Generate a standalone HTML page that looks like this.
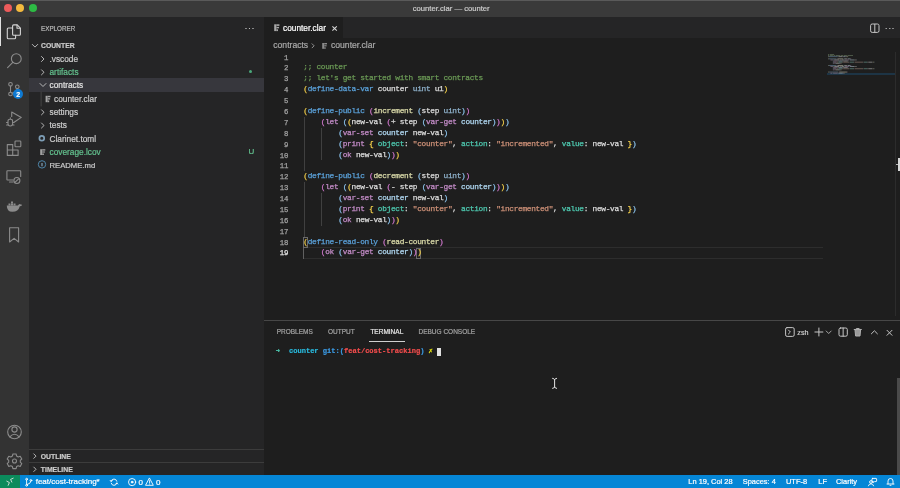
<!DOCTYPE html>
<html><head><meta charset="utf-8">
<style>
*{margin:0;padding:0;box-sizing:border-box}
body{will-change:transform}
html,body{width:900px;height:488px;overflow:hidden;background:#1e1e1e;font-family:"Liberation Sans",sans-serif;color:#cccccc}
.a{position:absolute}
.t{position:absolute;white-space:pre;line-height:1;-webkit-text-stroke:0.2px currentColor}
#title{left:0;top:0;width:900px;height:17px;background:#3a3a3a;border-top:1px solid #5a5a5a}
#act{left:0;top:17px;width:29px;height:458px;background:#333333}
#side{left:29px;top:17px;width:235px;height:458px;background:#252526}
#tabs{left:264px;top:17px;width:636px;height:21px;background:#252526}
#tab1{left:264px;top:17px;width:79px;height:21px;background:#1e1e1e}
#status{left:0;top:475px;width:900px;height:13px;background:#0586d6}
#remote{left:0;top:475px;width:20px;height:13px;background:#0b8b5c}
.mono{font-family:"Liberation Mono",monospace}
.code{position:absolute;left:303.3px;-webkit-text-stroke:0.25px currentColor;transform:translateY(0.2px);font-family:"Liberation Mono",monospace;font-size:7.8px;letter-spacing:-0.3px;white-space:pre;line-height:10.833px;height:10.833px}
.ln{position:absolute;left:264px;-webkit-text-stroke:0.25px currentColor;transform:translateY(0.6px);width:24.4px;text-align:right;font-family:"Liberation Mono",monospace;font-size:7.3px;white-space:pre;line-height:10.833px;color:#9a9a9a}
.g1{color:#f2cf4a}.g2{color:#d279cf}.g3{color:#8cc4ee}
.kw{color:#5aa0d8}.pk{color:#c48cc8}.fn{color:#dcdcaa}.vr{color:#b0d8f2}.wh{color:#dcdcdc}.ty{color:#4ec9b0}.ui{color:#8fb2cc}.st{color:#ce9178}.cm{color:#6a9955}.nm{color:#b5cea8}
</style></head><body>
<div id="title" class="a"></div>
<div class="a" style="left:4.2px;top:4.2px;width:8px;height:8px;border-radius:50%;background:#ec5b5b"></div>
<div class="a" style="left:16px;top:4.2px;width:8px;height:8px;border-radius:50%;background:#f4ba3e"></div>
<div class="a" style="left:28.8px;top:4.2px;width:8px;height:8px;border-radius:50%;background:#2dbb44"></div>
<div class="t" style="left:412.8px;top:4.8px;font-size:7.65px;color:#cccccc">counter.clar — counter</div>

<div id="act" class="a"></div>
<div id="side" class="a"></div>

<div class="a" style="left:0;top:17px;width:1.2px;height:29px;background:#e0e0e0"></div>
<!-- activity icons -->
<svg class="a" style="left:0;top:17px" width="29" height="458" viewBox="0 0 29 458" fill="none" stroke-linecap="round" stroke-linejoin="round">
 <g stroke="#d4d4d4" stroke-width="1.1">
  <path d="M13.6 7.9 h3.6 l3.2 3.2 v6.1 q0 1 -1 1 h-5.8 q-1 0 -1 -1 v-8.3 q0 -1 1 -1z"/>
  <path d="M17 8 v3.2 h3.3"/>
  <path d="M12.6 11 h-4.3 q-1 0 -1 1 v8.8 q0 1 1 1 h6.3 q1 0 1 -1 v-2.5"/>
 </g>
 <g stroke="#8c8c8c" stroke-width="1.1">
  <circle cx="16.3" cy="41.7" r="4.9"/>
  <path d="M12.8 45.3 L7.6 50.6"/>
  <circle cx="10.5" cy="67.3" r="1.8"/><circle cx="10.5" cy="77" r="1.8"/><circle cx="17.3" cy="69.8" r="1.8"/>
  <path d="M10.5 69.1 V75.2 M17.3 71.6 q0 3.3 -5.2 4.6"/>
  <path d="M11.7 99.5 V95 L21.3 100.4 L14.5 105"/>
  <path d="M8 104 q0 -1.8 2.3 -1.8 q2.3 0 2.3 1.8 v2.8 q0 2.2 -2.3 2.2 q-2.3 0 -2.3 -2.2z M7.8 105.5 h-1.3 M12.8 105.5 h1.3 M7.8 108 h-1.2 M12.8 108 h1.2 M10.3 102.2 v-1.3"/>
  <path d="M7.3 127.6 h5.4 v5.4 h-5.4z M7.3 133 h5.4 v5.4 h-5.4z M12.7 133 h5.4 v5.4 h-5.4z"/><rect x="15" y="124" width="5.8" height="5.8" rx="0.8"/>
  <path d="M13 163 h-5.5 q-0.6 0 -0.6 -0.6 v-8 q0 -0.6 0.6 -0.6 h12.6 q0.6 0 0.6 0.6 v5 M9.5 165 h3.5"/>
  <circle cx="16.9" cy="163.5" r="3" fill="#333"/>
  <path d="M15.2 165.2 L18.6 161.8"/>
  <path d="M9.6 210.8 h9 v14.2 l-4.5 -3.6 l-4.5 3.6z"/>
  <circle cx="14.5" cy="415" r="6.8"/>
  <circle cx="14.5" cy="412.5" r="2.6"/>
  <path d="M9.8 419.8 q4.7 -5 9.4 0"/>
 </g>
 <path d="M6.8 188.5 h11 q1 -1.8 2.2 -1.6 l0.6 0.6 q1.2 -0.3 1.6 0.5 q-1 1.2 -2.4 1.2 q-1.5 5.6 -7.5 5.6 q-5.5 0 -5.5 -6.3z M8.5 186.6 h2 v1.6 h-2z M11 186.6 h2 v1.6 h-2z M11 184.6 h2 v1.6 h-2z M13.5 186.6 h2 v1.6 h-2z" fill="#8c8c8c"/>
 <g stroke="#8c8c8c" stroke-width="1.1" transform="translate(14.5 444)">
  <circle r="2"/>
  <path d="M-1.6 -7 h3.2 l0.5 2 l1.6 0.9 l2 -0.7 l1.6 2.8 l-1.5 1.4 v1.8 l1.5 1.4 l-1.6 2.8 l-2 -0.7 l-1.6 0.9 l-0.5 2 h-3.2 l-0.5 -2 l-1.6 -0.9 l-2 0.7 l-1.6 -2.8 l1.5 -1.4 v-1.8 l-1.5 -1.4 l1.6 -2.8 l2 0.7 l1.6 -0.9z"/>
 </g>
</svg>
<div class="a" style="left:13.4px;top:89px;width:10px;height:10px;border-radius:50%;background:#0e7ad3"></div>
<div class="t" style="left:16.3px;top:90.6px;font-size:7px;font-weight:700;color:#fff">2</div>

<!-- sidebar -->
<div class="t" style="left:40.9px;top:24.8px;font-size:7.2px;color:#bbbbbb;transform:scaleX(0.875);transform-origin:0 0">EXPLORER</div>
<div class="t" style="left:244.6px;top:23.6px;font-size:9px;color:#cccccc;letter-spacing:0.5px">···</div>
<div class="t" style="left:41px;top:42.4px;font-size:7.3px;font-weight:700;color:#cccccc;transform:scaleX(0.93);transform-origin:0 0">COUNTER</div>
<div class="a" style="left:29px;top:78px;width:235px;height:13.7px;background:#37373d"></div>
<svg class="a" style="left:29px;top:17px" width="235" height="160" fill="none" stroke="#c5c5c5" stroke-width="0.9" stroke-linecap="round" stroke-linejoin="round">
 <path d="M3.3 27.4 l2.7 2.7 l2.7 -2.7"/>
 <path d="M12.5 39.5 l2.5 2.5 l-2.5 2.5"/>
 <path d="M12.5 52.8 l2.5 2.5 l-2.5 2.5"/>
 <path d="M11 66.5 l3 3 l3 -3"/>
 <path d="M12.5 92.8 l2.5 2.5 l-2.5 2.5"/>
 <path d="M12.5 106 l2.5 2.5 l-2.5 2.5"/>
 <path d="M12.1 75 v14" stroke="#4a4a4a"/>
</svg>
<div class="t" style="left:49.5px;top:54.9px;font-size:8.3px;color:#cccccc">.vscode</div>
<div class="t" style="left:49.5px;top:68.2px;font-size:8.3px;color:#64c28f">artifacts</div>
<div class="a" style="left:248.8px;top:69.7px;width:3.6px;height:3.6px;border-radius:50%;background:#4aa87a"></div>
<div class="t" style="left:49.5px;top:81.4px;font-size:8.3px;color:#e0e0e0">contracts</div>
<div class="t" style="left:54px;top:95.0px;font-size:8.3px;color:#cccccc">counter.clar</div>
<div class="t" style="left:49.5px;top:108.2px;font-size:8.3px;color:#cccccc">settings</div>
<div class="t" style="left:49.5px;top:121.4px;font-size:8.3px;color:#cccccc">tests</div>
<div class="t" style="left:49.5px;top:134.7px;font-size:8.3px;color:#cccccc">Clarinet.toml</div>
<div class="t" style="left:49.5px;top:148.0px;font-size:8.3px;color:#64c28f">coverage.lcov</div>
<div class="t" style="left:248.4px;top:148.0px;font-size:8px;color:#64c28f">U</div>
<div class="t" style="left:49.5px;top:161.6px;font-size:7.7px;color:#cccccc">README.md</div>
<svg class="a" style="left:0;top:0" width="60" height="175">
 <g fill="#a6a6a6"><rect x="45.6" y="95.8" width="2" height="6.4"/><rect x="47.6" y="95.8" width="2.9" height="1.5"/><rect x="47.6" y="98.2" width="2.5" height="1.3"/><rect x="47.6" y="100.5" width="1.6" height="1.7"/></g>
 <g fill="#a0a0a0"><rect x="40.2" y="149.2" width="2" height="5.8"/><rect x="42.2" y="149.2" width="3.1" height="1.4"/><rect x="42.2" y="151.4" width="2.7" height="1.2"/><rect x="42.2" y="153.5" width="1.7" height="1.5"/></g>
 <circle cx="41.8" cy="138.3" r="2.4" fill="none" stroke="#7d9db5" stroke-width="1.7"/>
 <circle cx="42" cy="164.4" r="3.7" fill="none" stroke="#4f86aa" stroke-width="1"/>
 <path d="M42 163 v3.2" stroke="#8ab0c8" stroke-width="1.1"/>
</svg>
<!-- outline/timeline -->
<div class="a" style="left:29px;top:449px;width:235px;height:1px;background:#3c3c3c"></div>
<div class="a" style="left:29px;top:462px;width:235px;height:1px;background:#3c3c3c"></div>
<svg class="a" style="left:29px;top:449px" width="20" height="26" fill="none" stroke="#c5c5c5" stroke-width="0.9"><path d="M4.5 4.6 l2.5 2.5 l-2.5 2.5 M4.5 17.8 l2.5 2.5 l-2.5 2.5"/></svg>
<div class="t" style="left:40.8px;top:453.7px;font-size:6.85px;font-weight:700;color:#cccccc">OUTLINE</div>
<div class="t" style="left:40.8px;top:467px;font-size:6.85px;font-weight:700;color:#cccccc">TIMELINE</div>
<div id="tabs" class="a"></div>
<div id="tab1" class="a"></div>


<div class="a" style="left:264px;top:38px;width:636px;height:14px;background:#1e1e1e"></div>
<svg class="a" style="left:264px;top:17px" width="100" height="36">
 <g fill="#a8a8a8"><rect x="10.2" y="7.3" width="2.2" height="6.8"/><rect x="12.4" y="7.3" width="3" height="1.6"/><rect x="12.4" y="9.9" width="2.6" height="1.4"/><rect x="12.4" y="12.3" width="1.6" height="1.8"/></g>
 <path d="M47.8 26.5 l2.3 2.3 l-2.3 2.3" fill="none" stroke="#a0a0a0" stroke-width="0.9"/>
 <g fill="#8a8a8a"><rect x="58.2" y="26" width="2" height="5.8"/><rect x="60.2" y="26" width="2.8" height="1.4"/><rect x="60.2" y="28.2" width="2.4" height="1.2"/><rect x="60.2" y="30.3" width="1.5" height="1.5"/></g>
 <path d="M68.4 9.3 l4.4 4.4 M72.8 9.3 l-4.4 4.4" fill="none" stroke="#d8d8d8" stroke-width="1.05"/>
</svg>
<div class="t" style="left:283px;top:23.6px;font-size:8.3px;color:#ffffff">counter.clar</div>
<div class="t" style="left:273.3px;top:41.4px;font-size:8.6px;color:#a9a9a9">contracts</div>
<div class="t" style="left:331px;top:41.4px;font-size:8.6px;color:#a9a9a9">counter.clar</div>
<svg class="a" style="left:868px;top:17px" width="32" height="21" fill="none" stroke="#c5c5c5" stroke-width="1">
 <rect x="2.6" y="7" width="8.4" height="8.4" rx="1.6"/><path d="M6.8 7 v8.4"/>
</svg>
<div class="t" style="left:884.8px;top:23.5px;font-size:9px;color:#c5c5c5;letter-spacing:0.4px">···</div>

<div class="ln" style="top:51.60px;color:#a2a2a2">1</div>
<div class="ln" style="top:62.48px;color:#a2a2a2">2</div>
<div class="ln" style="top:73.36px;color:#a2a2a2">3</div>
<div class="ln" style="top:84.24px;color:#a2a2a2">4</div>
<div class="ln" style="top:95.12px;color:#a2a2a2">5</div>
<div class="ln" style="top:106.00px;color:#a2a2a2">6</div>
<div class="ln" style="top:116.88px;color:#a2a2a2">7</div>
<div class="ln" style="top:127.76px;color:#a2a2a2">8</div>
<div class="ln" style="top:138.64px;color:#a2a2a2">9</div>
<div class="ln" style="top:149.52px;color:#a2a2a2">10</div>
<div class="ln" style="top:160.40px;color:#a2a2a2">11</div>
<div class="ln" style="top:171.28px;color:#a2a2a2">12</div>
<div class="ln" style="top:182.16px;color:#a2a2a2">13</div>
<div class="ln" style="top:193.04px;color:#a2a2a2">14</div>
<div class="ln" style="top:203.92px;color:#a2a2a2">15</div>
<div class="ln" style="top:214.80px;color:#a2a2a2">16</div>
<div class="ln" style="top:225.68px;color:#a2a2a2">17</div>
<div class="ln" style="top:236.56px;color:#a2a2a2">18</div>
<div class="ln" style="top:247.44px;color:#e6e6e6">19</div>
<div class="a" style="left:303px;top:247.4px;width:520px;height:11.5px;border:1px solid #2d2d2d;border-left:none;border-right:none"></div>
<div class="a" style="left:303.6px;top:116.88px;width:1px;height:54.40px;background:#404040"></div>
<div class="a" style="left:303.6px;top:182.16px;width:1px;height:54.40px;background:#404040"></div>
<div class="a" style="left:321.2px;top:127.76px;width:1px;height:32.64px;background:#404040"></div>
<div class="a" style="left:321.2px;top:193.04px;width:1px;height:32.64px;background:#404040"></div>
<div class="a" style="left:303.2px;top:247.44px;width:1px;height:11.3px;background:#606060"></div>
<div class="a" style="left:303.4px;top:236.8px;width:4.8px;height:11px;border:1px solid #6a6a6a"></div>
<div class="a" style="left:416.4px;top:247.6px;width:4.8px;height:11px;border:1px solid #6a6a6a"></div>
<div class="code" style="top:62.48px"><span class="cm">;; counter</span></div>
<div class="code" style="top:73.36px"><span class="cm">;; let's get started with smart contracts</span></div>
<div class="code" style="top:84.24px"><span class="g1">(</span><span class="kw">define-data-var</span> <span class="wh">counter</span> <span class="ui">uint</span> <span class="wh">u1</span><span class="g1">)</span></div>
<div class="code" style="top:106.00px"><span class="g1">(</span><span class="kw">define-public</span> <span class="g2">(</span><span class="fn">increment</span> <span class="g3">(</span><span class="wh">step</span> <span class="ui">uint</span><span class="g3">)</span><span class="g2">)</span></div>
<div class="code" style="top:116.88px">    <span class="g2">(</span><span class="pk">let</span> <span class="g3">(</span><span class="g1">(</span><span class="wh">new-val</span> <span class="g2">(</span><span class="wh">+ step</span> <span class="g3">(</span><span class="pk">var-get</span> <span class="vr">counter</span><span class="g3">)</span><span class="g2">)</span><span class="g1">)</span><span class="g3">)</span></div>
<div class="code" style="top:127.76px">        <span class="g3">(</span><span class="pk">var-set</span> <span class="vr">counter</span> <span class="wh">new-val</span><span class="g3">)</span></div>
<div class="code" style="top:138.64px">        <span class="g3">(</span><span class="pk">print</span> <span class="g1">{</span> <span class="ty">object</span><span class="wh">:</span> <span class="st">"counter"</span><span class="wh">,</span> <span class="ty">action</span><span class="wh">:</span> <span class="st">"incremented"</span><span class="wh">,</span> <span class="ty">value</span><span class="wh">:</span> <span class="wh">new-val</span> <span class="g1">}</span><span class="g3">)</span></div>
<div class="code" style="top:149.52px">        <span class="g3">(</span><span class="pk">ok</span> <span class="wh">new-val</span><span class="g3">)</span><span class="g2">)</span><span class="g1">)</span></div>
<div class="code" style="top:171.28px"><span class="g1">(</span><span class="kw">define-public</span> <span class="g2">(</span><span class="fn">decrement</span> <span class="g3">(</span><span class="wh">step</span> <span class="ui">uint</span><span class="g3">)</span><span class="g2">)</span></div>
<div class="code" style="top:182.16px">    <span class="g2">(</span><span class="pk">let</span> <span class="g3">(</span><span class="g1">(</span><span class="wh">new-val</span> <span class="g2">(</span><span class="wh">- step</span> <span class="g3">(</span><span class="pk">var-get</span> <span class="vr">counter</span><span class="g3">)</span><span class="g2">)</span><span class="g1">)</span><span class="g3">)</span></div>
<div class="code" style="top:193.04px">        <span class="g3">(</span><span class="pk">var-set</span> <span class="vr">counter</span> <span class="wh">new-val</span><span class="g3">)</span></div>
<div class="code" style="top:203.92px">        <span class="g3">(</span><span class="pk">print</span> <span class="g1">{</span> <span class="ty">object</span><span class="wh">:</span> <span class="st">"counter"</span><span class="wh">,</span> <span class="ty">action</span><span class="wh">:</span> <span class="st">"incremented"</span><span class="wh">,</span> <span class="ty">value</span><span class="wh">:</span> <span class="wh">new-val</span> <span class="g1">}</span><span class="g3">)</span></div>
<div class="code" style="top:214.80px">        <span class="g3">(</span><span class="pk">ok</span> <span class="wh">new-val</span><span class="g3">)</span><span class="g2">)</span><span class="g1">)</span></div>
<div class="code" style="top:236.56px"><span class="g1">(</span><span class="kw">define-read-only</span> <span class="g2">(</span><span class="fn">read-counter</span><span class="g2">)</span></div>
<div class="code" style="top:247.44px">    <span class="g2">(</span><span class="pk">ok</span> <span class="g3">(</span><span class="pk">var-get</span> <span class="vr">counter</span><span class="g3">)</span><span class="g2">)</span><span class="g1">)</span></div>
<div id="status" class="a"></div>
<div id="remote" class="a"></div>

<!-- minimap -->
<div class="a" style="left:827px;top:72.6px;width:68.5px;height:2.2px;background:#1d3445"></div>
<svg class="a" style="left:0;top:0;filter:saturate(0.5)" width="900" height="80" opacity="0.55"><rect x="828.00" y="54.00" width="1.22" height="0.9" fill="#6a9955"/><rect x="829.83" y="54.00" width="4.27" height="0.9" fill="#6a9955"/><rect x="828.00" y="55.10" width="1.22" height="0.9" fill="#6a9955"/><rect x="829.83" y="55.10" width="3.05" height="0.9" fill="#6a9955"/><rect x="833.49" y="55.10" width="1.83" height="0.9" fill="#6a9955"/><rect x="835.93" y="55.10" width="4.27" height="0.9" fill="#6a9955"/><rect x="840.81" y="55.10" width="2.44" height="0.9" fill="#6a9955"/><rect x="843.86" y="55.10" width="3.05" height="0.9" fill="#6a9955"/><rect x="847.52" y="55.10" width="5.49" height="0.9" fill="#6a9955"/><rect x="828.00" y="56.20" width="0.61" height="0.9" fill="#f2cf4a"/><rect x="828.61" y="56.20" width="9.15" height="0.9" fill="#5aa0d8"/><rect x="838.37" y="56.20" width="4.27" height="0.9" fill="#d4d4d4"/><rect x="843.25" y="56.20" width="2.44" height="0.9" fill="#b0d8f2"/><rect x="846.30" y="56.20" width="1.22" height="0.9" fill="#d4d4d4"/><rect x="847.52" y="56.20" width="0.61" height="0.9" fill="#f2cf4a"/><rect x="828.00" y="58.40" width="0.61" height="0.9" fill="#f2cf4a"/><rect x="828.61" y="58.40" width="7.93" height="0.9" fill="#5aa0d8"/><rect x="837.15" y="58.40" width="0.61" height="0.9" fill="#d279cf"/><rect x="837.76" y="58.40" width="5.49" height="0.9" fill="#dcdcaa"/><rect x="843.86" y="58.40" width="0.61" height="0.9" fill="#8cc4ee"/><rect x="844.47" y="58.40" width="2.44" height="0.9" fill="#d4d4d4"/><rect x="847.52" y="58.40" width="2.44" height="0.9" fill="#b0d8f2"/><rect x="849.96" y="58.40" width="0.61" height="0.9" fill="#8cc4ee"/><rect x="850.57" y="58.40" width="0.61" height="0.9" fill="#d279cf"/><rect x="830.44" y="59.50" width="0.61" height="0.9" fill="#d279cf"/><rect x="831.05" y="59.50" width="1.83" height="0.9" fill="#c48cc8"/><rect x="833.49" y="59.50" width="0.61" height="0.9" fill="#8cc4ee"/><rect x="834.10" y="59.50" width="0.61" height="0.9" fill="#f2cf4a"/><rect x="834.71" y="59.50" width="4.27" height="0.9" fill="#d4d4d4"/><rect x="839.59" y="59.50" width="0.61" height="0.9" fill="#d279cf"/><rect x="840.20" y="59.50" width="0.61" height="0.9" fill="#d4d4d4"/><rect x="841.42" y="59.50" width="2.44" height="0.9" fill="#d4d4d4"/><rect x="844.47" y="59.50" width="0.61" height="0.9" fill="#8cc4ee"/><rect x="845.08" y="59.50" width="4.27" height="0.9" fill="#c48cc8"/><rect x="849.96" y="59.50" width="4.27" height="0.9" fill="#b0d8f2"/><rect x="854.23" y="59.50" width="0.61" height="0.9" fill="#8cc4ee"/><rect x="854.84" y="59.50" width="0.61" height="0.9" fill="#d279cf"/><rect x="855.45" y="59.50" width="0.61" height="0.9" fill="#f2cf4a"/><rect x="856.06" y="59.50" width="0.61" height="0.9" fill="#8cc4ee"/><rect x="832.88" y="60.60" width="0.61" height="0.9" fill="#8cc4ee"/><rect x="833.49" y="60.60" width="4.27" height="0.9" fill="#c48cc8"/><rect x="838.37" y="60.60" width="4.27" height="0.9" fill="#b0d8f2"/><rect x="843.25" y="60.60" width="4.27" height="0.9" fill="#d4d4d4"/><rect x="847.52" y="60.60" width="0.61" height="0.9" fill="#8cc4ee"/><rect x="832.88" y="61.70" width="0.61" height="0.9" fill="#8cc4ee"/><rect x="833.49" y="61.70" width="3.05" height="0.9" fill="#c48cc8"/><rect x="837.15" y="61.70" width="0.61" height="0.9" fill="#f2cf4a"/><rect x="838.37" y="61.70" width="3.66" height="0.9" fill="#4ec9b0"/><rect x="842.03" y="61.70" width="0.61" height="0.9" fill="#d4d4d4"/><rect x="843.25" y="61.70" width="5.49" height="0.9" fill="#ce9178"/><rect x="848.74" y="61.70" width="0.61" height="0.9" fill="#d4d4d4"/><rect x="849.96" y="61.70" width="3.66" height="0.9" fill="#4ec9b0"/><rect x="853.62" y="61.70" width="0.61" height="0.9" fill="#d4d4d4"/><rect x="854.84" y="61.70" width="7.93" height="0.9" fill="#ce9178"/><rect x="862.77" y="61.70" width="0.61" height="0.9" fill="#d4d4d4"/><rect x="863.99" y="61.70" width="3.05" height="0.9" fill="#4ec9b0"/><rect x="867.04" y="61.70" width="0.61" height="0.9" fill="#d4d4d4"/><rect x="868.26" y="61.70" width="4.27" height="0.9" fill="#d4d4d4"/><rect x="873.14" y="61.70" width="0.61" height="0.9" fill="#f2cf4a"/><rect x="873.75" y="61.70" width="0.61" height="0.9" fill="#8cc4ee"/><rect x="832.88" y="62.80" width="0.61" height="0.9" fill="#8cc4ee"/><rect x="833.49" y="62.80" width="1.22" height="0.9" fill="#c48cc8"/><rect x="835.32" y="62.80" width="4.27" height="0.9" fill="#d4d4d4"/><rect x="839.59" y="62.80" width="0.61" height="0.9" fill="#8cc4ee"/><rect x="840.20" y="62.80" width="0.61" height="0.9" fill="#d279cf"/><rect x="840.81" y="62.80" width="0.61" height="0.9" fill="#f2cf4a"/><rect x="828.00" y="65.00" width="0.61" height="0.9" fill="#f2cf4a"/><rect x="828.61" y="65.00" width="7.93" height="0.9" fill="#5aa0d8"/><rect x="837.15" y="65.00" width="0.61" height="0.9" fill="#d279cf"/><rect x="837.76" y="65.00" width="5.49" height="0.9" fill="#dcdcaa"/><rect x="843.86" y="65.00" width="0.61" height="0.9" fill="#8cc4ee"/><rect x="844.47" y="65.00" width="2.44" height="0.9" fill="#d4d4d4"/><rect x="847.52" y="65.00" width="2.44" height="0.9" fill="#b0d8f2"/><rect x="849.96" y="65.00" width="0.61" height="0.9" fill="#8cc4ee"/><rect x="850.57" y="65.00" width="0.61" height="0.9" fill="#d279cf"/><rect x="830.44" y="66.10" width="0.61" height="0.9" fill="#d279cf"/><rect x="831.05" y="66.10" width="1.83" height="0.9" fill="#c48cc8"/><rect x="833.49" y="66.10" width="0.61" height="0.9" fill="#8cc4ee"/><rect x="834.10" y="66.10" width="0.61" height="0.9" fill="#f2cf4a"/><rect x="834.71" y="66.10" width="4.27" height="0.9" fill="#d4d4d4"/><rect x="839.59" y="66.10" width="0.61" height="0.9" fill="#d279cf"/><rect x="840.20" y="66.10" width="0.61" height="0.9" fill="#d4d4d4"/><rect x="841.42" y="66.10" width="2.44" height="0.9" fill="#d4d4d4"/><rect x="844.47" y="66.10" width="0.61" height="0.9" fill="#8cc4ee"/><rect x="845.08" y="66.10" width="4.27" height="0.9" fill="#c48cc8"/><rect x="849.96" y="66.10" width="4.27" height="0.9" fill="#b0d8f2"/><rect x="854.23" y="66.10" width="0.61" height="0.9" fill="#8cc4ee"/><rect x="854.84" y="66.10" width="0.61" height="0.9" fill="#d279cf"/><rect x="855.45" y="66.10" width="0.61" height="0.9" fill="#f2cf4a"/><rect x="856.06" y="66.10" width="0.61" height="0.9" fill="#8cc4ee"/><rect x="832.88" y="67.20" width="0.61" height="0.9" fill="#8cc4ee"/><rect x="833.49" y="67.20" width="4.27" height="0.9" fill="#c48cc8"/><rect x="838.37" y="67.20" width="4.27" height="0.9" fill="#b0d8f2"/><rect x="843.25" y="67.20" width="4.27" height="0.9" fill="#d4d4d4"/><rect x="847.52" y="67.20" width="0.61" height="0.9" fill="#8cc4ee"/><rect x="832.88" y="68.30" width="0.61" height="0.9" fill="#8cc4ee"/><rect x="833.49" y="68.30" width="3.05" height="0.9" fill="#c48cc8"/><rect x="837.15" y="68.30" width="0.61" height="0.9" fill="#f2cf4a"/><rect x="838.37" y="68.30" width="3.66" height="0.9" fill="#4ec9b0"/><rect x="842.03" y="68.30" width="0.61" height="0.9" fill="#d4d4d4"/><rect x="843.25" y="68.30" width="5.49" height="0.9" fill="#ce9178"/><rect x="848.74" y="68.30" width="0.61" height="0.9" fill="#d4d4d4"/><rect x="849.96" y="68.30" width="3.66" height="0.9" fill="#4ec9b0"/><rect x="853.62" y="68.30" width="0.61" height="0.9" fill="#d4d4d4"/><rect x="854.84" y="68.30" width="7.93" height="0.9" fill="#ce9178"/><rect x="862.77" y="68.30" width="0.61" height="0.9" fill="#d4d4d4"/><rect x="863.99" y="68.30" width="3.05" height="0.9" fill="#4ec9b0"/><rect x="867.04" y="68.30" width="0.61" height="0.9" fill="#d4d4d4"/><rect x="868.26" y="68.30" width="4.27" height="0.9" fill="#d4d4d4"/><rect x="873.14" y="68.30" width="0.61" height="0.9" fill="#f2cf4a"/><rect x="873.75" y="68.30" width="0.61" height="0.9" fill="#8cc4ee"/><rect x="832.88" y="69.40" width="0.61" height="0.9" fill="#8cc4ee"/><rect x="833.49" y="69.40" width="1.22" height="0.9" fill="#c48cc8"/><rect x="835.32" y="69.40" width="4.27" height="0.9" fill="#d4d4d4"/><rect x="839.59" y="69.40" width="0.61" height="0.9" fill="#8cc4ee"/><rect x="840.20" y="69.40" width="0.61" height="0.9" fill="#d279cf"/><rect x="840.81" y="69.40" width="0.61" height="0.9" fill="#f2cf4a"/><rect x="828.00" y="71.60" width="0.61" height="0.9" fill="#f2cf4a"/><rect x="828.61" y="71.60" width="9.76" height="0.9" fill="#5aa0d8"/><rect x="838.98" y="71.60" width="0.61" height="0.9" fill="#d279cf"/><rect x="839.59" y="71.60" width="7.32" height="0.9" fill="#dcdcaa"/><rect x="846.91" y="71.60" width="0.61" height="0.9" fill="#d279cf"/><rect x="830.44" y="72.70" width="0.61" height="0.9" fill="#d279cf"/><rect x="831.05" y="72.70" width="1.22" height="0.9" fill="#c48cc8"/><rect x="832.88" y="72.70" width="0.61" height="0.9" fill="#8cc4ee"/><rect x="833.49" y="72.70" width="4.27" height="0.9" fill="#c48cc8"/><rect x="838.37" y="72.70" width="4.27" height="0.9" fill="#b0d8f2"/><rect x="842.64" y="72.70" width="0.61" height="0.9" fill="#8cc4ee"/><rect x="843.25" y="72.70" width="0.61" height="0.9" fill="#d279cf"/><rect x="843.86" y="72.70" width="0.61" height="0.9" fill="#f2cf4a"/></svg>
<div class="a" style="left:895px;top:52px;width:1px;height:264px;background:#2c2c2c"></div>
<div class="a" style="left:897.7px;top:158.4px;width:2.3px;height:12.5px;background:#d8d8d8"></div><div class="a" style="left:895.6px;top:164px;width:2.2px;height:1.4px;background:#b8b8b8"></div>

<!-- panel -->
<div class="a" style="left:264px;top:320px;width:636px;height:1px;background:#474747"></div>
<div class="t" style="left:276.7px;top:329.4px;font-size:6.5px;color:#a2a2a2">PROBLEMS</div>
<div class="t" style="left:328px;top:329.4px;font-size:6.5px;color:#a2a2a2">OUTPUT</div>
<div class="t" style="left:370.4px;top:329.4px;font-size:6.5px;color:#e7e7e7">TERMINAL</div>
<div class="a" style="left:369px;top:340.8px;width:36px;height:1px;background:#d0d0d0"></div>
<div class="t" style="left:418.5px;top:329.4px;font-size:6.5px;color:#a2a2a2">DEBUG CONSOLE</div>
<svg class="a" style="left:780px;top:320px" width="120" height="25" fill="none" stroke="#c5c5c5" stroke-width="1" stroke-linecap="round" stroke-linejoin="round">
 <rect x="5.6" y="7.6" width="8.6" height="8.8" rx="1.5"/><path d="M8.4 10 l2 2 l-2 2"/>
 <path d="M38.9 8 v8 M34.9 12 h8"/>
 <path d="M46.2 11 l2.5 2.5 l2.5 -2.5" stroke-width="0.8"/>
 <rect x="59" y="8" width="8.3" height="8.2" rx="1.5"/><path d="M63.15 8 v8.2"/>
 <path d="M74.2 9.5 h7.2 M76.5 9.3 v-0.8 h2.6 v0.8 M75 9.8 l0.6 6.2 h4.4 l0.6 -6.2z" fill="#9a9a9a" stroke="#b0b0b0"/>
 <path d="M91.4 13.8 l3 -3 l3 3"/>
 <path d="M107 10.3 l5 5 M112 10.3 l-5 5"/>
</svg>
<div class="t" style="left:797.3px;top:329.2px;font-size:7.2px;color:#cccccc">zsh</div>
<!-- terminal -->
<div class="t mono" style="left:275.7px;top:348.3px;font-size:7.05px;font-weight:700;color:#4ec9b0">➜</div>
<div class="t mono" style="left:289px;top:348.3px;font-size:7.05px;font-weight:700"><span style="color:#29b8db">counter</span> <span style="color:#3b9ae4">git:(</span><span style="color:#f14c4c">feat/cost-tracking</span><span style="color:#3b9ae4">)</span> <span style="color:#e5e510">✗</span></div>
<div class="a" style="left:437px;top:347.6px;width:3.8px;height:8px;background:#e0e0e0"></div>
<svg class="a" style="left:550px;top:376px" width="10" height="14" fill="none" stroke="#e4e4e4" stroke-width="1" stroke-linecap="round"><path d="M2.6 2.3 q1.6 0 2 1.6 q0.4 -1.6 2 -1.6 M4.6 3.9 v7 M2.6 12.4 q1.6 0 2 -1.6 q0.4 1.6 2 1.6"/></svg>
<div class="a" style="left:897px;top:378px;width:3px;height:97px;background:#4a4a4a"></div>

<!-- status bar items -->
<svg class="a" style="left:0;top:475px" width="170" height="13" fill="none" stroke="#ffffff" stroke-width="0.9" stroke-linecap="round" stroke-linejoin="round">
 <path d="M6.8 6.2 l2.6 1.4 l-1.2 2.7 M13.2 3.2 l-2.6 1.2 l1.2 2.7" stroke="#e8e8e8" stroke-width="0.85"/>
 <circle cx="26.6" cy="4.2" r="0.9"/><circle cx="26.6" cy="10.3" r="0.9"/><circle cx="30.9" cy="5.4" r="0.9"/>
 <path d="M26.6 5.1 v4.3 M30.9 6.3 q0 2.3 -3.6 3.2"/>
 <path d="M111.2 6.2 a2.9 2.9 0 0 1 5.6 0 M116.8 8.2 a2.9 2.9 0 0 1 -5.6 0 M110.2 5.4 l1 1.2 l1 -1.2 M117.8 9 l-1 -1.2 l-1 1.2"/>
 <circle cx="132.1" cy="7.1" r="3.6"/><circle cx="132.1" cy="7.1" r="0.9" fill="#fff"/>
 <path d="M149.6 3.3 l3.7 7 h-7.4z M149.6 5.6 v2.3 M149.6 9 v0.1"/>
</svg>
<div class="t" style="left:35.7px;top:478.3px;font-size:8px;color:#ffffff">feat/cost-tracking*</div>
<div class="t" style="left:138.6px;top:478.8px;font-size:8px;color:#ffffff">0</div>
<div class="t" style="left:156px;top:478.8px;font-size:8px;color:#ffffff">0</div>
<div class="t" style="left:688.3px;top:478.3px;font-size:7.45px;color:#ffffff">Ln 19, Col 28</div>
<div class="t" style="left:742.7px;top:478.3px;font-size:7.45px;color:#ffffff">Spaces: 4</div>
<div class="t" style="left:786px;top:478.3px;font-size:7.45px;color:#ffffff">UTF-8</div>
<div class="t" style="left:818.3px;top:478.3px;font-size:7.45px;color:#ffffff">LF</div>
<div class="t" style="left:836px;top:478.3px;font-size:7.45px;color:#ffffff">Clarity</div>
<svg class="a" style="left:860px;top:475px" width="40" height="13" fill="none" stroke="#ffffff" stroke-width="0.9" stroke-linecap="round" stroke-linejoin="round">
 <path d="M12.6 3.4 h3.4 q0.6 0 0.6 0.6 v2 q0 0.6 -0.6 0.6 h-1.4 l-1.1 1 v-1 h-0.9 q-0.6 0 -0.6 -0.6 v-2 q0 -0.6 0.6 -0.6z"/><circle cx="11" cy="7" r="1.4"/><path d="M8.4 10.8 q0.5 -2 2.6 -2 q2.1 0 2.6 2"/>
 <path d="M27 9 h7 M28 9 v-3 a2.5 2.5 0 0 1 5 0 v3 M30 10.3 h1"/>
</svg>
</body></html>
